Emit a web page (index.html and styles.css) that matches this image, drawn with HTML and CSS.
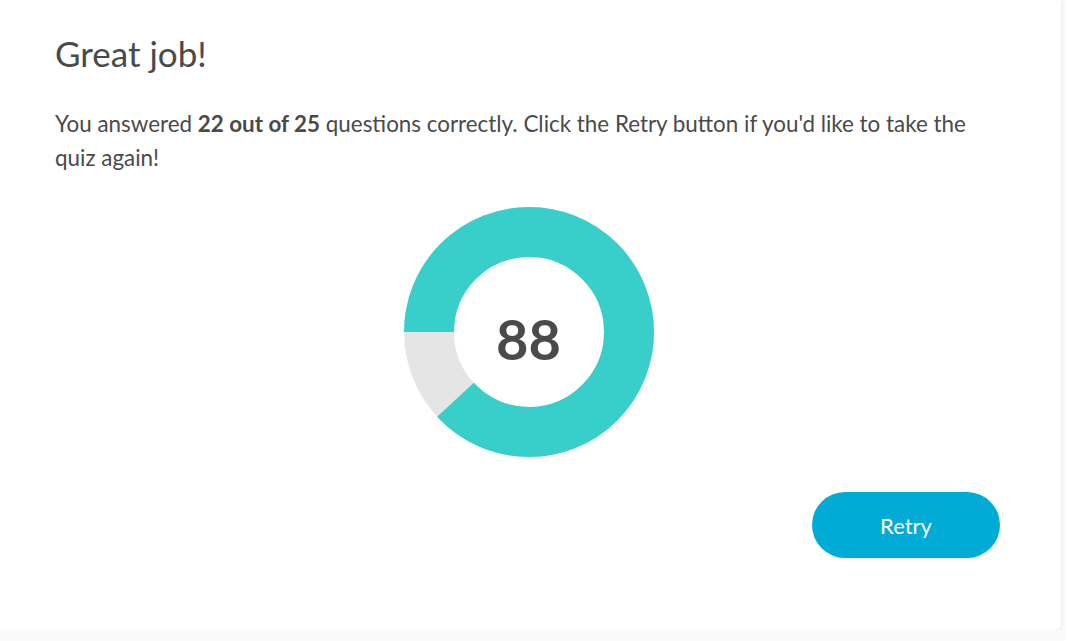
FILE: index.html
```html
<!DOCTYPE html>
<html lang="en">
<head>
<meta charset="utf-8">
<title>Quiz result</title>
<link rel="stylesheet" href="styles.css">
</head>
<body>
<div class="card">
  <h1 class="title">Great job!</h1>
  <p class="summary">You answered <strong>22 out of 25</strong> questions correctly. Click the Retry button if you'd like to take the quiz again!</p>
  <div class="chart">
    <svg class="donut" width="252" height="252" viewBox="0 0 252 252">
      <circle cx="126" cy="126" r="100" fill="none" stroke="#e5e5e5" stroke-width="50"/>
      <circle cx="126" cy="126" r="100" fill="none" stroke="#38cfca" stroke-width="50"
        stroke-dasharray="552.92 628.32" transform="rotate(180 126 126)"/>
    </svg>
    <span class="score">88</span>
  </div>
  <div class="actions">
    <button class="retry">Retry</button>
  </div>
</div>
</body>
</html>
```
FILE: styles.css
```css
html, body {
  margin: 0;
  padding: 0;
  background: #fafafa;
}
body {
  font-family: "Source Sans Pro", Lato, "Liberation Sans", sans-serif;
  color: #4a4a4a;
}
.card {
  width: 1061px;
  height: 630px;
  box-sizing: border-box;
  background: #fff;
  border-radius: 0 0 6px 0;
  box-shadow: 0 2px 6px rgba(0, 0, 0, 0.08);
  padding: 33px 61px 0 55px;
  display: flex;
  flex-direction: column;
}
.title {
  margin: 0;
  font-size: 35px;
  font-weight: 400;
  line-height: 40px;
  color: #4a4a4a;
}
.summary {
  margin: 34px 0 0;
  font-size: 22.4px;
  line-height: 34px;
}
.summary strong {
  font-weight: 700;
}
.chart {
  position: relative;
  align-self: center;
  width: 252px;
  height: 252px;
  margin-top: 31px;
  margin-left: 2px;
}
.donut {
  display: block;
}
.score {
  position: absolute;
  inset: 0;
  display: flex;
  align-items: center;
  justify-content: center;
  font-size: 56px;
  font-weight: 700;
  color: #4a4a4a;
  padding-top: 12px;
}
.actions {
  display: flex;
  justify-content: flex-end;
  margin-top: 34px;
}
.retry {
  width: 188px;
  height: 66px;
  border: none;
  border-radius: 33px;
  background: #00abd6;
  color: #fff;
  font-family: inherit;
  font-size: 22px;
  cursor: pointer;
}
```
